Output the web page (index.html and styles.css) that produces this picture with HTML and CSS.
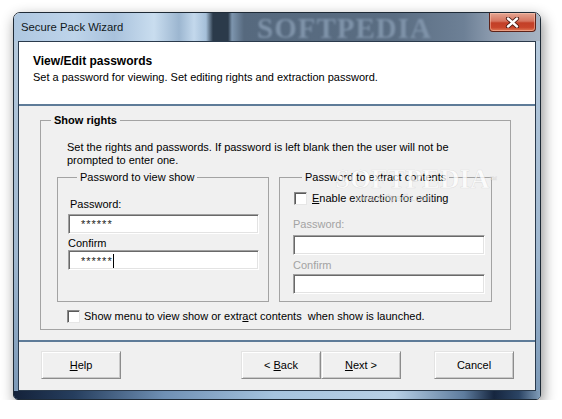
FILE: index.html
```html
<!DOCTYPE html>
<html lang="en">
 <head>
  <meta charset="UTF-8" />
  <meta name="viewport" content="width=device-width, initial-scale=1.0" />
  <title>Secure Pack Wizard</title>
  <link rel="stylesheet" href="styles.css">
 </head>
 <body>
  <div class="window">
   <!-- title bar -->
   <div class="titlebar">
    <span class="title">Secure Pack Wizard</span>
    <span class="glass-mark">SOFTPEDIA</span>
    <button class="close" title="Close">
     <svg width="17" height="11" viewBox="0 0 17 11">
      <path d="M4 1.5 L13 9.5 M13 1.5 L4 9.5" stroke="#4a1a12" stroke-width="4.2" stroke-linecap="round" />
      <path d="M4 1.5 L13 9.5 M13 1.5 L4 9.5" stroke="#ffffff" stroke-width="2.4" stroke-linecap="round" />
     </svg>
    </button>
   </div>
   <div class="frame">
    <div class="client">
     <!-- page header -->
     <div class="header">
      <div class="header-title">View/Edit passwords</div>
      <div class="header-sub">Set a password for viewing. Set editing rights and extraction password.</div>
     </div>
     <div class="body">
      <div class="body-mark">SOFTPEDIA<sup>™</sup><small>www.softpedia.com</small></div>
      <fieldset class="group group-main">
       <legend>Show rights</legend>
       <div class="group-inner">
        <p class="intro">Set the rights and passwords. If password is left blank then the user will not be<br />prompted to enter one.</p>
        <div class="group-row">
         <fieldset class="group group-view">
          <legend>Password to view show</legend>
          <div class="label label-first">Password:</div>
          <div class="field">******</div>
          <div class="label label-confirm">Confirm</div>
          <div class="field field-last">******<span class="caret"></span></div>
         </fieldset>
         <fieldset class="group group-extract">
          <legend>Password to extract contents</legend>
          <label class="check check-extract"><span class="box"></span><span><u>E</u>nable extraction for editing</span></label>
          <div class="label label-disabled label-pw">Password:</div>
          <div class="field field-pw"></div>
          <div class="label label-disabled label-cf">Confirm</div>
          <div class="field field-cf"></div>
         </fieldset>
        </div>
        <label class="check check-menu"><span class="box"></span><span>Show menu to view show or extr<u>a</u>ct contents&nbsp; when show is launched.</span></label>
       </div>
      </fieldset>
     </div>
     <!-- wizard buttons -->
     <div class="footer">
      <button class="btn"><u>H</u>elp</button>
      <div class="nav">
       <button class="btn">&lt; <u>B</u>ack</button>
       <button class="btn"><u>N</u>ext &gt;</button>
      </div>
      <button class="btn">Cancel</button>
     </div>
    </div>
   </div>
  </div>
 </body>
</html>
```

FILE: styles.css
```css
body {
 margin: 0;
 background: #ffffff;
 font-family: "Liberation Sans", Arial, sans-serif;
 font-size: 11px;
 color: #000;
}
.window {
 box-sizing: border-box;
 width: 528px;
 margin: 12px 0 0 13px;
 border: 1px solid #1e2a36;
 border-radius: 7px 7px 5px 5px;
 overflow: hidden;
 box-shadow: 2px 5px 14px rgba(0, 0, 0, 0.45);
}
.titlebar {
 position: relative;
 display: flex;
 height: 28px;
 background: linear-gradient(to right,
   #aec7e0 0, #bed4ea 60px, #a9c2dc 100px, #c9ddef 140px, #9cb6d0 165px,
   #c3d8ec 180px, #a5bfd8 192px, #2b3a4a 199px, #2b3a4a 214px, #7d95ae 218px,
   #56697e 230px, #5a6d82 380px, #6d8096 450px, #8e9db0 480px, #a8b5c4 528px);
}
.title {
 align-self: center;
 padding-left: 7px;
 font-size: 11.3px;
 color: #101820;
}
.glass-mark {
 position: absolute;
 left: 243px;
 top: -1px;
 font-family: "Liberation Serif", serif;
 font-weight: bold;
 font-size: 29px;
 letter-spacing: 1px;
 color: #7f93a9;
 filter: blur(0.8px);
}
.close {
 position: relative;
 margin-left: auto;
 margin-right: 4px;
 width: 47px;
 height: 19px;
 padding: 0;
 border: 1px solid #5d2218;
 border-top: none;
 border-radius: 0 0 4px 4px;
 background: linear-gradient(#e4a592 0, #d67560 45%, #c23f27 55%, #c8452b 80%, #e07a58 100%);
 box-shadow: inset 0 0 0 1px rgba(255, 210, 190, 0.45);
 display: flex;
 align-items: center;
 justify-content: center;
}
.frame {
 padding: 0 4px 8px 4px;
 background:
  linear-gradient(to right, #14223a 0, #263e5e 60px, #6f90b4 150px, #a5c3de 260px, #b8d0e6 380px, #5e7c9e 450px, #16263f 480px, #2b4464 505px, #8aa6c2 528px) bottom / 100% 8px no-repeat,
  linear-gradient(#b5c9dc, #9fb7cf 60%, #7b98b6);
}
.client {
 border: 1px solid #2a3a4c;
 background: #f0f0f0;
}
.header {
 height: 64px;
 box-sizing: border-box;
 padding: 12px 14px 0;
 background: #ffffff;
 border-bottom: 2px solid #5e7b98;
 line-height: 14px;
}
.header-title {
 font-weight: bold;
 font-size: 12px;
}
.header-sub {
 margin-top: 2px;
}
.body {
 position: relative;
 padding: 8px 24px 10px 21px;
 line-height: 13px;
}
.body-mark {
 position: absolute;
 left: 316px;
 top: 60px;
 font-family: "Liberation Serif", serif;
 font-weight: bold;
 font-size: 27px;
 line-height: 27px;
 color: rgba(255, 255, 255, 0.75);
 -webkit-text-stroke: 0.6px rgba(120, 120, 120, 0.18);
 pointer-events: none;
}
.body-mark sup {
 font-size: 8px;
 vertical-align: top;
}
.body-mark small {
 display: block;
 font-family: "Liberation Sans", sans-serif;
 font-weight: normal;
 font-size: 9px;
 line-height: 10px;
 padding-left: 20px;
}
.group {
 margin: 0;
 padding: 0;
 min-width: 0;
 border: 1px solid #a3a3a3;
}
.group legend {
 margin-left: 9px;
 padding: 0 3px;
 line-height: 13px;
}
.group-main > legend {
 margin-left: 10px;
 font-weight: bold;
}
.group-inner {
 padding: 0 0 6px 16px;
}
.intro {
 margin: 14px 0 0 10px;
}
.group-row {
 display: flex;
 gap: 10px;
 margin-top: 4px;
}
.group-view {
 width: 212px;
 box-sizing: border-box;
 padding: 0 9px 31px 10px;
}
.group-extract {
 width: 213px;
 box-sizing: border-box;
 padding: 0 6px 7px 13px;
}
.label-first {
 margin: 14px 0 0 2px;
}
.label-confirm {
 margin-top: 3px;
}
.field {
 box-sizing: border-box;
 height: 20px;
 padding: 3px 0 0 12px;
 background: #fff;
 border: 1px solid;
 border-color: #a0a0a0 #ffffff #ffffff #a0a0a0;
 box-shadow: inset 1px 1px 0 #696969, inset -1px -1px 0 #e3e3e3;
 letter-spacing: 1px;
 color: #222;
}
.label-first + .field {
 margin-top: 3px;
}
.caret {
 display: inline-block;
 width: 1px;
 height: 14px;
 vertical-align: -3px;
 background: #000;
}
.check {
 display: flex;
 align-items: center;
 gap: 4px;
}
.box {
 box-sizing: border-box;
 width: 13px;
 height: 13px;
 background: #fff;
 border: 1px solid;
 border-color: #8a8a8a #e6e6e6 #e6e6e6 #8a8a8a;
 box-shadow: inset 1px 1px 0 #5a5a5a;
}
.check-extract {
 margin: 8px 0 0 1px;
 gap: 5px;
}
.label-disabled {
 color: #a3a3a3;
}
.label-pw {
 margin-top: 13px;
}
.field-pw {
 margin-top: 4px;
}
.label-cf {
 margin-top: 4px;
}
.field-cf {
 margin-top: 2px;
}
.check-menu {
 margin: 8px 0 0 10px;
}
.footer {
 display: flex;
 padding: 9px 21px 11px 22px;
 border-top: 2px solid #5e7b98;
}
.nav {
 display: flex;
 margin-left: auto;
 margin-right: 33px;
}
.btn {
 width: 80px;
 height: 28px;
 padding: 0;
 font-family: inherit;
 font-size: 11px;
 color: #000;
 background: #f0f0f0;
 border: 1px solid;
 border-color: #e3e3e3 #8c8c8c #8c8c8c #e3e3e3;
 box-shadow: inset 1px 1px 0 #ffffff, inset -1px -1px 0 #c9c9c9;
}
```
